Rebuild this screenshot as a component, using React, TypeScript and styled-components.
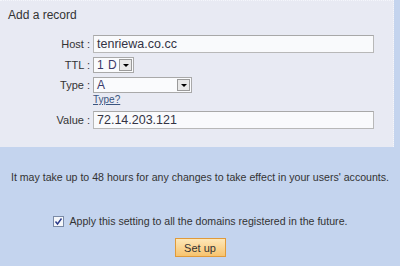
import React from "react";
import styled, { createGlobalStyle } from "styled-components";

const GlobalStyle = createGlobalStyle`
  html, body {
    margin: 0;
    padding: 0;
    background: #c4d4ee;
  }
  body {
    font-family: "Liberation Sans", Arial, sans-serif;
    font-size: 10.6px;
    color: #333;
  }
`;

const Page = styled.div`
  width: 400px;
  height: 266px;
  display: flex;
  flex-direction: column;
  background: #c4d4ee;
  overflow: hidden;
`;

const Panel = styled.div`
  width: 394px;
  height: 147px;
  box-sizing: border-box;
  background: #e8eaf3;
  border-top: 1px dotted #f4f6fb;
  border-right: 1px dotted #f4f6fb;
  padding: 7px 0 0 8px;
`;

const Title = styled.div`
  font-size: 12px;
  color: #333;
  height: 27px;
`;

const Form = styled.div`
  display: grid;
  grid-template-columns: 82px 1fr;
  column-gap: 3px;
  row-gap: 4px;
  align-items: center;
`;

const Label = styled.label`
  text-align: right;
  color: #333;
  font-size: 11px;
`;

const TextInput = styled.div`
  width: 281px;
  height: 18px;
  box-sizing: border-box;
  background: #f9fafc;
  border: 1px solid #b8b8b8;
  border-top-color: #a8a8a8;
  font-size: 12.5px;
  line-height: 16px;
  padding-left: 3px;
  color: #333344;
`;

const Select = styled.div<{ $width: number }>`
  width: ${(p) => p.$width}px;
  height: 16px;
  box-sizing: border-box;
  background: #fafbfd;
  border: 1px solid #a9a9a9;
  display: flex;
  align-items: center;
  font-size: 12px;
  letter-spacing: 0.5px;
  color: #3a3a6a;
  padding-left: 3px;
`;

const SelectValue = styled.span`
  flex: 1;
  line-height: 14px;
`;

const Arrow = styled.span`
  width: 13px;
  height: 12px;
  margin-right: 1px;
  box-sizing: border-box;
  border: 1px solid #9a9a9a;
  background: #e8e8e8;
  display: flex;
  align-items: center;
  justify-content: center;
  &::after {
    content: "";
    border-left: 3px solid transparent;
    border-right: 3px solid transparent;
    border-top: 3px solid #000;
  }
`;

const HelpLink = styled.a`
  font-size: 10px;
  color: #3a5580;
  text-decoration: underline;
  margin-top: -3px;
  margin-bottom: 2px;
`;

const Notice = styled.div`
  margin-top: 24px;
  text-align: center;
  color: #333;
`;

const CheckRow = styled.label`
  margin-top: 32px;
  display: flex;
  align-items: center;
  justify-content: center;
  gap: 6px;
  color: #333;
`;

const Check = styled.span`
  width: 9px;
  height: 9px;
  border: 1px solid #7a8aa6;
  background: #f4f6fa;
  display: flex;
  align-items: center;
  justify-content: center;
`;

const ButtonRow = styled.div`
  margin-top: 11px;
  display: flex;
  justify-content: center;
`;

const Button = styled.button`
  width: 51px;
  height: 19px;
  box-sizing: border-box;
  border: 1px solid #e09a3a;
  background: linear-gradient(#fde7b8, #f7c36e);
  font-family: "Liberation Sans", Arial, sans-serif;
  font-size: 11px;
  color: #333;
  padding: 0;
`;

const Spacer = styled.span``;

export default function App() {
  return (
    <Page>
      <GlobalStyle />
      <Panel>
        <Title>Add a record</Title>
        <Form>
          <Label>Host :</Label>
          <TextInput>tenriewa.co.cc</TextInput>
          <Label>TTL :</Label>
          <Select $width={41}>
            <SelectValue>1 D</SelectValue>
            <Arrow />
          </Select>
          <Label>Type :</Label>
          <Select $width={99}>
            <SelectValue>A</SelectValue>
            <Arrow />
          </Select>
          <Spacer />
          <HelpLink href="#">Type?</HelpLink>
          <Label>Value :</Label>
          <TextInput>72.14.203.121</TextInput>
        </Form>
      </Panel>
      <Notice>It may take up to 48 hours for any changes to take effect in your users' accounts.</Notice>
      <CheckRow>
        <Check>
          <svg width="9" height="9" viewBox="0 0 9 9">
            <path d="M1.5 4.5 L3.5 7 L7.5 1.5" fill="none" stroke="#2a3a8a" strokeWidth="1.4" />
          </svg>
        </Check>
        Apply this setting to all the domains registered in the future.
      </CheckRow>
      <ButtonRow>
        <Button>Set up</Button>
      </ButtonRow>
    </Page>
  );
}
